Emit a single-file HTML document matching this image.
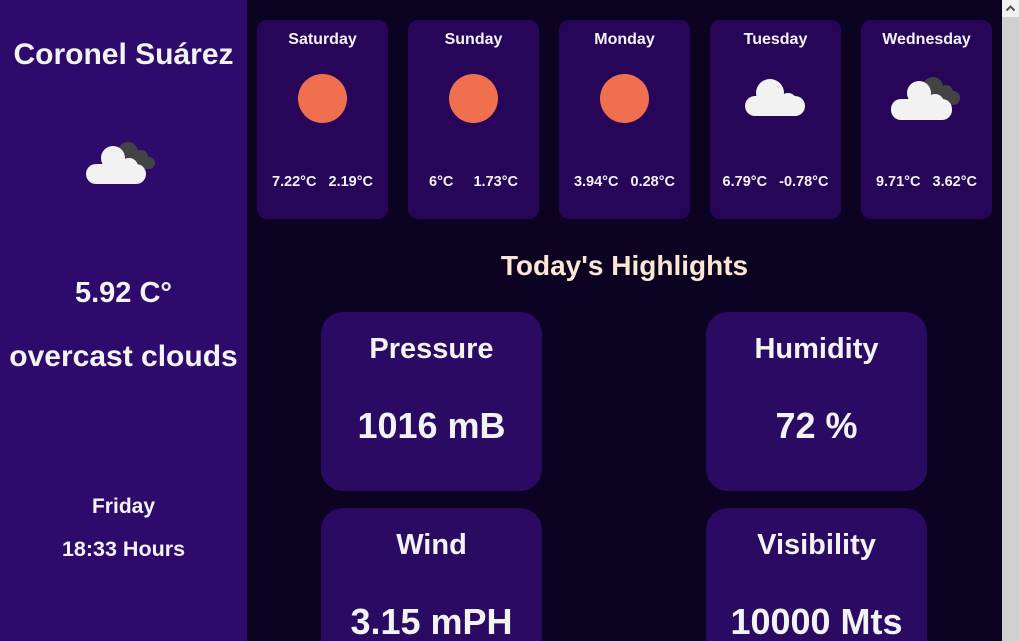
<!DOCTYPE html>
<html><head><meta charset="utf-8"><style>
*{margin:0;padding:0;box-sizing:border-box}
html,body{width:1019px;height:641px;overflow:hidden;background:#0c0221;font-family:"Liberation Sans",sans-serif;font-weight:bold;color:#f3f3f3}
#wrap{position:relative;width:1019px;height:641px;overflow:hidden}
.side{position:absolute;left:0;top:0;width:247px;height:641px;background:#2d0a6b;text-align:center}
.abs{position:absolute;left:0;width:247px;text-align:center;white-space:nowrap}
.card{position:absolute;top:20px;width:131px;height:199px;background:#27065a;border-radius:10px;text-align:center}
.card .d{position:absolute;top:11px;left:0;right:0;font-size:16px}
.card .t{position:absolute;top:154px;left:0;right:0;font-size:14.5px}
.sun{position:absolute;left:41px;top:54px;width:49px;height:49px;border-radius:50%;background:#ef6f4f}
.ico{position:absolute;left:0;top:0}
.hl{position:absolute;width:221px;height:179px;background:#2a0a62;border-radius:22px;text-align:center}
.hl.low{height:133px;border-radius:22px 22px 0 0}
.hl .a{position:absolute;top:21px;left:0;right:0;font-size:29px}
.hl .b{position:absolute;top:94px;left:0;right:0;font-size:36px;white-space:nowrap;line-height:39px}
.sb{position:absolute;left:1002px;top:0;width:17px;height:641px;background:#d0d0d0}
.sb .top{position:absolute;left:0;top:0;width:17px;height:17px;background:#f1f1f1}
</style></head><body><div id="wrap">
<div class="side">
<div class="abs" style="top:38px;font-size:30px">Coronel Suárez</div>
<svg class="ico" style="left:86px;top:140px" width="72" height="46" viewBox="0 0 72 46">
<g fill="#434343"><circle cx="42" cy="12" r="10"/><circle cx="55" cy="17" r="7"/><circle cx="63" cy="23" r="6"/><rect x="38" y="18" width="28" height="11" rx="5"/></g>
<g fill="#f2f2f2"><circle cx="27" cy="18" r="12"/><circle cx="43" cy="27" r="9"/><rect x="0" y="24" width="60" height="20" rx="10"/></g>
</svg>
<div class="abs" style="top:277px;font-size:29px">5.92 C°</div>
<div class="abs" style="top:340px;font-size:30px">overcast clouds</div>
<div class="abs" style="top:495px;font-size:21px">Friday</div>
<div class="abs" style="top:537px;font-size:21.5px">18:33 Hours</div>
</div>

<div class="card" style="left:257px"><div class="d">Saturday</div><div class="sun"></div><div class="t">7.22°C &nbsp;&nbsp;2.19°C</div></div>
<div class="card" style="left:408px"><div class="d">Sunday</div><div class="sun"></div><div class="t">6°C &nbsp;&nbsp;&nbsp;&nbsp;1.73°C</div></div>
<div class="card" style="left:559px"><div class="d">Monday</div><div class="sun"></div><div class="t">3.94°C &nbsp;&nbsp;0.28°C</div></div>
<div class="card" style="left:710px"><div class="d">Tuesday</div>
<svg class="ico" style="left:35px;top:59px" width="62" height="40" viewBox="0 0 62 40">
<g fill="#f2f2f2"><circle cx="25" cy="14" r="14"/><circle cx="43" cy="23" r="9"/><rect x="0" y="17" width="60" height="20" rx="10"/></g></svg>
<div class="t">6.79°C &nbsp;&nbsp;-0.78°C</div></div>
<div class="card" style="left:861px"><div class="d">Wednesday</div>
<svg class="ico" style="left:30px;top:56px" width="72" height="46" viewBox="0 0 72 46">
<g fill="#434343"><circle cx="42" cy="11" r="10"/><circle cx="55" cy="16" r="7"/><circle cx="62" cy="22" r="7"/><rect x="38" y="16" width="30" height="13" rx="6"/></g>
<g fill="#f2f2f2"><circle cx="28" cy="17" r="12"/><circle cx="44" cy="27" r="9"/><rect x="0" y="23" width="61" height="21" rx="10"/></g></svg>
<div class="t">9.71°C &nbsp;&nbsp;3.62°C</div></div>

<div style="position:absolute;left:247px;width:755px;top:250px;text-align:center;font-size:28px;color:#fbe8d3">Today's Highlights</div>

<div class="hl" style="left:321px;top:312px"><div class="a">Pressure</div><div class="b">1016 mB</div></div>
<div class="hl" style="left:706px;top:312px"><div class="a">Humidity</div><div class="b">72 %</div></div>
<div class="hl low" style="left:321px;top:508px"><div class="a">Wind</div><div class="b">3.15 mPH</div></div>
<div class="hl low" style="left:706px;top:508px"><div class="a">Visibility</div><div class="b">10000 Mts</div></div>

<div class="sb"><div class="top"><svg width="17" height="17" viewBox="0 0 17 17"><path d="M4.5 10.5 L8.5 6.5 L12.5 10.5" stroke="#505050" stroke-width="2" fill="none"/></svg></div></div>
</div></body></html>
